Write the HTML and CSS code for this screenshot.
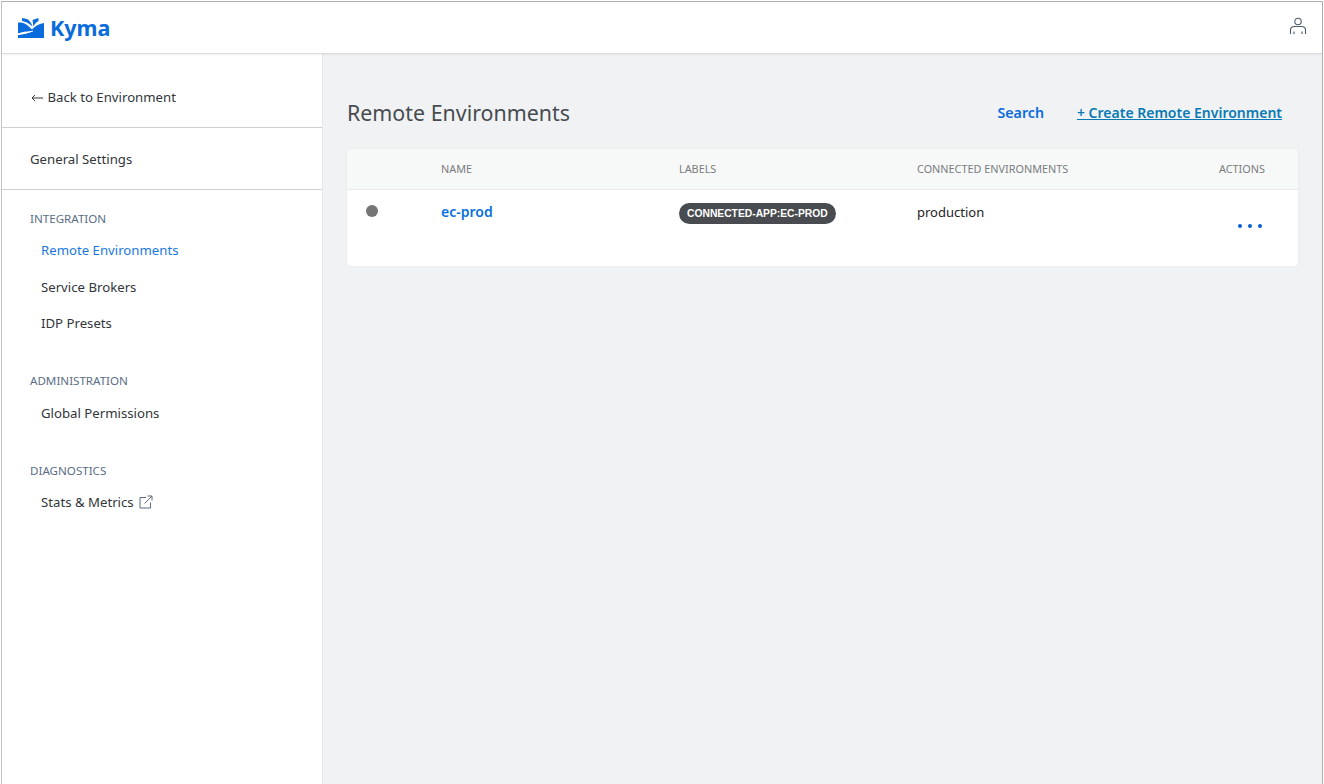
FILE: index.html
```html
<!DOCTYPE html>
<html lang="en">
<head>
    <meta charset="UTF-8">
    <title>Remote Environments</title>
    <link rel="stylesheet" href="styles.css">
</head>
<body>
    <div class="frame">
        <header class="topbar">
            <a class="logo" href="#">
                <svg class="logo-mark" width="26" height="20" viewBox="0 0 26 20">
                    <path d="M0 4.5 H3.5 C8 5.5 11 8.5 14 11.5 C17 8.5 20 6 26 5 V20 H0 V17 C6 16.5 10 15 14.5 13.5 C10 13 5 14 0 15.5 Z" fill="#0a6bdc"/>
                    <path d="M0 16 C6 15.5 11 14.5 15 13" fill="none" stroke="#fff" stroke-width="1"/>
                    <path d="M4 0 L9 1 C11 2 13 4 14.5 8.5 C11 5.5 8 3.5 4 3 Z" fill="#0a6bdc"/>
                    <path d="M14.5 2 L20.5 0 V3 C18.5 4 16.5 6 15.5 8.5 Z" fill="#0a6bdc"/>
                </svg>
                <span>Kyma</span>
            </a>
            <svg class="user-icon" width="18" height="18" viewBox="0 0 18 18" fill="none" stroke="#4a5a6a" stroke-width="1.1">
                <circle cx="9" cy="4.5" r="3.2"/>
                <path d="M1.5 17 V13 C1.5 10.5 3.5 9.5 5.5 9.5 H12.5 C14.5 9.5 16.5 10.5 16.5 13 V17"/>
                <path d="M5 14.5 V17 M13 14.5 V17"/>
            </svg>
        </header>

        <div class="layout">
            <aside class="sidebar">
                <a class="back-link" href="#">
                    <svg class="arrow" width="12" height="8" viewBox="0 0 12 8" fill="none" stroke="#32363a" stroke-width="1">
                        <path d="M12 4 H1 M4 1 L1 4 L4 7"/>
                    </svg>
                    Back to Environment
                </a>
                <a class="general-link" href="#">General Settings</a>

                <div class="nav-group">
                    <h4>INTEGRATION</h4>
                    <a class="active" href="#">Remote Environments</a>
                    <a href="#">Service Brokers</a>
                    <a href="#">IDP Presets</a>
                </div>
                <div class="nav-group">
                    <h4>ADMINISTRATION</h4>
                    <a href="#">Global Permissions</a>
                </div>
                <div class="nav-group">
                    <h4>DIAGNOSTICS</h4>
                    <a href="#">Stats &amp; Metrics
                        <svg class="ext-icon" width="14" height="14" viewBox="0 0 14 14" fill="none" stroke="#5b6b7b" stroke-width="1">
                            <path d="M7 2.5 H1 V13 H11.5 V7.5"/>
                            <path d="M5.5 8.5 L13 1 M8.5 1 H13 V5.5"/>
                        </svg>
                    </a>
                </div>
            </aside>

            <main class="content">
                <div class="page-head">
                    <h1>Remote Environments</h1>
                    <div class="page-actions">
                        <a class="action-search" href="#">Search</a>
                        <a class="action-create" href="#">+ Create Remote Environment</a>
                    </div>
                </div>

                <div class="card">
                    <div class="row row-head">
                        <div></div>
                        <div>NAME</div>
                        <div>LABELS</div>
                        <div>CONNECTED ENVIRONMENTS</div>
                        <div class="col-actions">ACTIONS</div>
                    </div>
                    <div class="row row-item">
                        <div><span class="status-dot"></span></div>
                        <div><a class="env-name" href="#">ec-prod</a></div>
                        <div><span class="label-pill">CONNECTED-APP:EC-PROD</span></div>
                        <div class="env-value">production</div>
                        <div class="col-dots"><span></span><span></span><span></span></div>
                    </div>
                </div>
            </main>
        </div>
    </div>
</body>
</html>
```

FILE: styles.css
```css
* {
    box-sizing: border-box;
}
html, body {
    height: 100%;
}
body {
    margin: 0;
    padding-top: 1px;
    font-family: "Noto Sans", Arial, sans-serif;
    font-size: 13.2px;
    color: #32363a;
    background: #fff;
    overflow: hidden;
}
a {
    text-decoration: none;
    color: inherit;
}
.frame {
    height: 783px;
    margin: 0 1px;
    border-top: 1px solid #b0b0b0;
    border-left: 1px solid #c4c4c4;
    border-right: 1px solid #b0b0b0;
    display: flex;
    flex-direction: column;
}
.topbar {
    height: 52px;
    flex-shrink: 0;
    display: flex;
    align-items: center;
    justify-content: space-between;
    padding: 0 15px 0 16px;
    background: #fff;
    border-bottom: 1px solid #dcdddf;
    box-shadow: 0 1px 2px rgba(0, 0, 0, 0.06);
    position: relative;
}
.logo {
    display: flex;
    align-items: center;
    gap: 6px;
    color: #0a6bdc;
    font-size: 21.5px;
    font-weight: 700;
}
.user-icon {
    margin-top: -4px;
}
.layout {
    flex: 1;
    display: flex;
}
.sidebar {
    width: 321px;
    flex-shrink: 0;
    background: #fff;
    border-right: 1px solid #e6e7e8;
}
.back-link {
    display: block;
    height: 74px;
    padding: 33px 28px 0;
    line-height: 20px;
    border-bottom: 1px solid #d0d0d0;
}
.arrow {
    margin-left: 1px;
    margin-right: 1px;
}
.general-link {
    display: block;
    height: 62px;
    padding: 21px 28px 0;
    line-height: 20px;
    border-bottom: 1px solid #d0d0d0;
}
.nav-group {
    padding: 0 28px;
    margin-bottom: 37px;
}
.nav-group h4 {
    margin: 0;
    padding-top: 21px;
    font-size: 11.6px;
    line-height: 16px;
    font-weight: 400;
    color: #5a6d85;
}
.nav-group + .nav-group h4 {
    padding-top: 0;
}
.nav-group a {
    display: block;
    margin-left: 11px;
    margin-top: 13px;
    line-height: 20px;
    height: 23px;
}
.nav-group a.active {
    color: #1a78e0;
    margin-bottom: 14px;
}
.nav-group + .nav-group a {
    margin-top: 14px;
}
.nav-group + .nav-group + .nav-group a {
    margin-top: 13px;
}
.ext-icon {
    vertical-align: -2px;
    margin-left: 2px;
}
.content {
    flex: 1;
    background: #f0f2f4;
    padding: 0 24px;
}
.page-head {
    height: 95px;
    display: flex;
    align-items: center;
    justify-content: space-between;
    padding-top: 22px;
    padding-right: 16px;
}
.page-head h1 {
    margin: 0;
    font-size: 21.4px;
    font-weight: 400;
    color: #484c50;
}
.page-actions {
    display: flex;
    gap: 33px;
    font-size: 14px;
    font-weight: 600;
}
.action-search {
    color: #0a6bdc;
    font-size: 14.2px;
}
.action-create {
    color: #0a7ab5;
    text-decoration: underline;
}
.card {
    background: #fff;
    border-radius: 4px;
    box-shadow: 0 0 2px rgba(0, 0, 0, 0.08);
    overflow: hidden;
}
.row {
    display: grid;
    grid-template-columns: 94px 238px 238px 1fr 80px;
}
.row-head {
    height: 41px;
    padding-bottom: 2px;
    align-items: center;
    background: #f7f8f8;
    border-bottom: 1px solid #e9eaeb;
    font-size: 10.85px;
    color: #7a7d80;
}
.col-actions {
    padding-left: 1px;
}
.row-item {
    height: 76px;
    padding-top: 12px;
}
.status-dot {
    display: block;
    width: 12px;
    height: 12px;
    margin: 3px 0 0 19px;
    border-radius: 50%;
    background: #757575;
}
.env-name {
    color: #0b6fdc;
    font-size: 14px;
    font-weight: 600;
}
.label-pill {
    display: inline-block;
    height: 21px;
    margin-top: 1px;
    padding: 0 8px;
    border-radius: 11px;
    background: #484b4f;
    color: #fff;
    font-family: "Liberation Sans", Arial, sans-serif;
    font-size: 10.3px;
    font-weight: 700;
    line-height: 21px;
}
.env-value {
    padding-top: 1px;
    font-size: 13px;
    color: #1f2225;
}
.col-dots {
    display: flex;
    gap: 6px;
    padding: 22px 0 0 20px;
}
.col-dots span {
    width: 4px;
    height: 4px;
    border-radius: 50%;
    background: #0a5ed1;
}
```
